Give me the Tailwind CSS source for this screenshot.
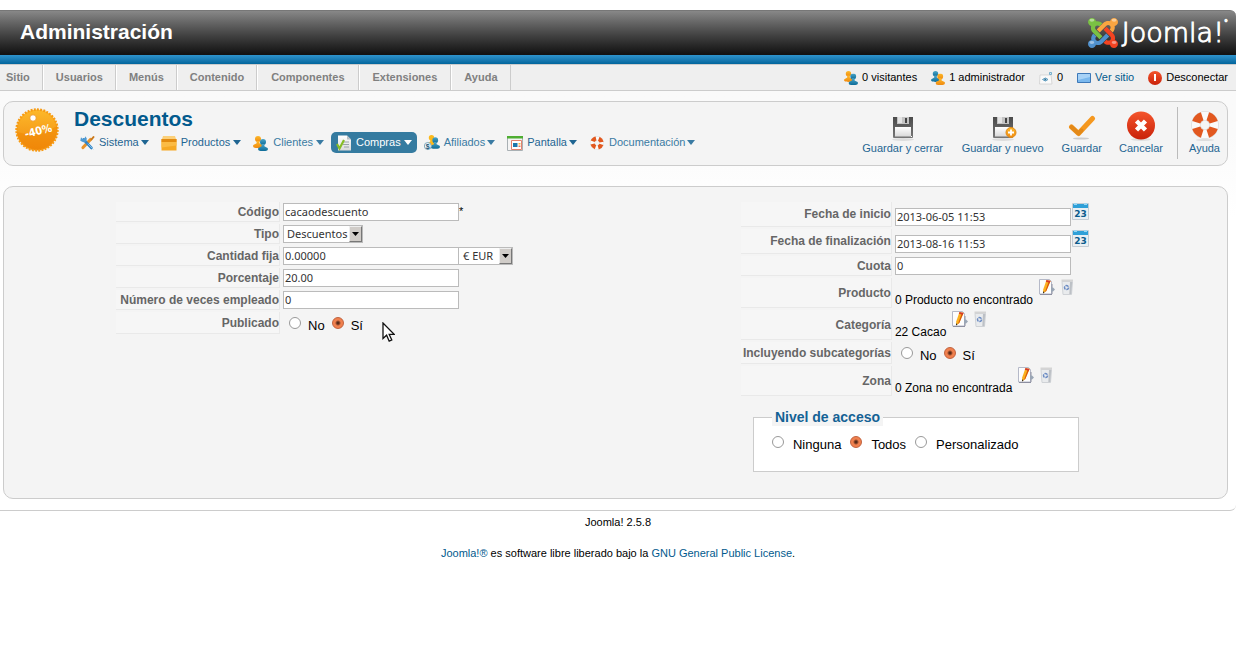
<!DOCTYPE html>
<html lang="es">

<head>
    <meta charset="UTF-8">
    <meta name="viewport" content="width=device-width, initial-scale=1">
    <title>Descuentos - Administración</title>
    <script src="https://cdn.jsdelivr.net/npm/@tailwindcss/browser@4"></script>
</head>

<body class="bg-white pt-2.5 font-['Liberation_Sans',Arial,sans-serif] text-[11px] text-black">

    <!-- shared icons -->
    <svg class="absolute size-0">
        <defs>
            <linearGradient id="gGold" x1="0" y1="0" x2="0" y2="1">
                <stop offset="0" stop-color="#fdb92a" />
                <stop offset="1" stop-color="#f08a10" />
            </linearGradient>
            <linearGradient id="gTeal" x1="0" y1="0" x2="0" y2="1">
                <stop offset="0" stop-color="#4aa5c8" />
                <stop offset="1" stop-color="#0d6c98" />
            </linearGradient>
            <linearGradient id="gSteel" x1="0" y1="0" x2="0" y2="1">
                <stop offset="0" stop-color="#4a4a4a" />
                <stop offset="1" stop-color="#777" />
            </linearGradient>
            <linearGradient id="gPaper" x1="0" y1="0" x2="0" y2="1">
                <stop offset="0" stop-color="#fff" />
                <stop offset="1" stop-color="#d9d9d9" />
            </linearGradient>
            <linearGradient id="gRed" x1="0" y1="0" x2="0" y2="1">
                <stop offset="0" stop-color="#f4552c" />
                <stop offset="1" stop-color="#c9210a" />
            </linearGradient>
        </defs>
        <symbol id="person" viewBox="0 0 10 12">
            <circle cx="5" cy="3" r="3" />
            <path d="M3.6 5h2.8v2.200L9.600 9c.6.6.4 2-.4 2.400-2 .8-6.400.8-8.400 0C0 11-.2 9.600.4 9l3.200-1.800z" />
        </symbol>
        <symbol id="caret" viewBox="0 0 8 5">
            <path d="M0 0h8L4 5z" fill="currentColor" />
        </symbol>
        <symbol id="floppy" viewBox="0 0 28 28">
            <ellipse cx="14" cy="25.500" rx="11" ry="1.500" fill="#ddd" />
            <path d="M4 3h20v20q0 1-1 1H5q-1 0-1-1z" fill="url(#gSteel)" />
            <path d="M8 3h12v7H8z" fill="#c4c4c4" />
            <path d="M9 3h4v6H9z" fill="#e4e4e4" />
            <path d="M16 4h2v5h-2z" fill="#444" />
            <path d="M6 13h16v9.500H6z" fill="url(#gPaper)" />
            <path d="M22 22h1v1h-1z" fill="#fff" />
        </symbol>
        <symbol id="buoy" viewBox="0 0 28 28">
            <circle cx="14" cy="14" r="9" fill="none" stroke="#d4d4d4" stroke-width="9.400" />
            <circle cx="14" cy="14" r="9" fill="none" stroke="#fafafa" stroke-width="8.400" />
            <circle cx="14" cy="14" r="9.200" fill="none" stroke="#e2581f" stroke-width="8.400" pathLength="80"
                stroke-dasharray="12 8" stroke-dashoffset="-4" />
        </symbol>
        <symbol id="calendar" viewBox="0 0 17 17">
            <path d="M.5.5h16v16H.5z" fill="#e9eff3" stroke="#c3ccd3" />
            <path d="M1 1h15v4H1z" fill="#2fa0d8" />
            <path d="M2 0h3v2H2zM12 0h3v2h-3z" fill="#9ad6f2" />
        </symbol>
        <symbol id="edit" viewBox="0 0 16 16">
            <path d="M.5.5h10l2 2v12.500H.5z" fill="#fdfdfd" stroke="#b5b9c8" />
            <path d="M1 15.500h12M13 5v10" stroke="#8d8fa0" fill="none" />
            <path d="M7.500 1l4 1-4.200 10-3.300 2.500.2-4z" fill="#fbb01f" />
            <path d="M10 1.500l1.500.5-4.200 10-1.300 1z" fill="#d8560c" />
            <path d="M7.500 1l4 1-.7 1.800-4-1z" fill="#d33a2c" />
            <path d="M4.100 12.500l1.600.6-1.700 1.400z" fill="#222" />
            <path d="M12 8.500h2l2 2-2 2h-2z" fill="#9aa6b5" />
        </symbol>
        <symbol id="trash" viewBox="0 0 16 16">
            <path d="M3 2.500h10.500l-1 13H4z" fill="#e9ebed" stroke="#cfd2d6" />
            <path d="M2.500 .5h11.500v2H2.500z" fill="#d4d4d4" />
            <path d="M11 3l-.7 12h1.900l1-12z" fill="#bcc0c5" />
            <circle cx="7.500" cy="8.500" r="2" fill="none" stroke="#6c8cc4" stroke-width="1.500" pathLength="9"
                stroke-dasharray="2.400 .6" />
        </symbol>
    </svg>

    <header>
        <div
            class="flex h-[45px] items-center justify-between rounded-tr-md border-t border-[#777] bg-linear-to-b from-[#888] to-[#111] pr-2 pl-5">
            <h1 class="pb-0.5 text-[21px] leading-7 font-bold text-white">Administración</h1>
            <a href="#" class="flex items-center gap-1 text-white">
                <svg class="size-[30px]" viewBox="0 32 448 448">
                    <defs>
                        <path id="arm"
                            d="M.6 92.100C.6 58.800 27.400 32 60.400 32c30 0 54.500 21.900 59.200 50.200 32.600-7.600 67.100.6 96.500 30l-44.300 44.300c-20.500-20.500-42.600-16.300-55.400-3.500-14.300 14.300-14.300 37.900 0 52.200l99.500 99.500-44 44.300c-87.700-87.200-49.700-49.700-99.800-99.700-26.800-26.500-35-64.800-24.800-98.900C20.400 144.600.6 120.700.6 92.100z" />
                    </defs>
                    <use href="#arm" fill="#7ac143" />
                    <use href="#arm" fill="#f9a541" transform="rotate(90 224 256)" />
                    <use href="#arm" fill="#f44321" transform="rotate(180 224 256)" />
                    <use href="#arm" fill="#5091cd" transform="rotate(270 224 256)" />
                    <g fill="#fff" opacity=".45">
                        <ellipse cx="58" cy="66" rx="36" ry="22" />
                        <ellipse cx="390" cy="66" rx="36" ry="22" />
                        <ellipse cx="58" cy="398" rx="36" ry="22" />
                        <ellipse cx="390" cy="398" rx="36" ry="22" />
                    </g>
                </svg>
                <span class="flex font-['DejaVu_Sans',sans-serif] text-[27px] leading-[30px] font-extralight [-webkit-text-stroke:1px_white]">Joomla!<sup
                        class="top-0 text-[8px] leading-3">°</sup></span>
            </a>
        </div>
        <div class="h-[9px] bg-linear-to-b from-[#2e94cd] to-[#00659c]"></div>
        <div class="flex h-[27px] items-center justify-between border-y border-[#ccc] bg-[#efefef] pr-2">
            <nav class="flex h-full font-bold text-[#808080]">
                <a href="#" class="flex items-center border-r border-[#ccc] pr-3 pl-1.5">Sitio</a>
                <a href="#" class="flex items-center border-r border-l border-r-[#ccc] border-l-white px-3">Usuarios</a>
                <a href="#" class="flex items-center border-r border-l border-r-[#ccc] border-l-white px-3">Menús</a>
                <a href="#" class="flex items-center border-r border-l border-r-[#ccc] border-l-white px-3">Contenido</a>
                <a href="#" class="flex items-center border-r border-l border-r-[#ccc] border-l-white px-[13px]">Componentes</a>
                <a href="#" class="flex items-center border-r border-l border-r-[#ccc] border-l-white px-[13px]">Extensiones</a>
                <a href="#" class="flex items-center border-r border-l border-r-[#ccc] border-l-white px-3">Ayuda</a>
            </nav>
            <div class="flex items-center gap-3.5">
                <span class="flex items-center gap-1">
                    <svg class="size-3.5" viewBox="0 0 14 14">
                        <use href="#person" x="0" y="0" width="9" height="11" fill="url(#gGold)" />
                        <use href="#person" x="4.500" y="2.500" width="9.500" height="11.500" fill="url(#gTeal)" />
                    </svg>
                    0 visitantes
                </span>
                <span class="flex items-center gap-1">
                    <svg class="size-3.5" viewBox="0 0 14 14">
                        <use href="#person" x="0" y="0" width="9" height="11" fill="url(#gTeal)" />
                        <use href="#person" x="4.500" y="2.500" width="9.500" height="11.500" fill="url(#gGold)" />
                    </svg>
                    1 administrador
                </span>
                <span class="flex items-center gap-1">
                    <svg class="size-3.5" viewBox="0 0 14 14">
                        <path d="M1 4h11l1 9H.5z" fill="#fafafa" stroke="#ccc" stroke-width=".7" />
                        <path d="M3.500 8.500q3-3 5.500 0-2.500 3-5.500 0z" fill="none" stroke="#5b9cc0" />
                        <circle cx="6.300" cy="8.500" r="1" fill="#2b7096" />
                        <path d="M10.500 1.500h2v2h-2z" fill="#d8ecf5" stroke="#5aa0c4" stroke-width=".8" />
                    </svg>
                    0
                </span>
                <a href="#" class="flex items-center gap-1 text-[#025a8d]">
                    <svg class="size-3.5" viewBox="0 0 14 14">
                        <path d="M.5 2.500h13v9H.5z" fill="#7ab8ee" stroke="#3d78b8" />
                        <path d="M1 3h12v3L1 9z" fill="#a7d2f7" />
                    </svg>
                    Ver sitio
                </a>
                <a href="#" class="flex items-center gap-1">
                    <svg class="size-3.5" viewBox="0 0 14 14">
                        <circle cx="7" cy="7" r="7" fill="url(#gRed)" />
                        <path d="M6 3h2v7H6z" fill="#fff" />
                    </svg>
                    Desconectar
                </a>
            </div>
        </div>
    </header>

    <div class="rounded-br-md border-b border-[#ccc] bg-linear-to-b from-[#fafafa] from-10% to-white to-30% pt-2.5 pr-2 pb-[11px] pl-[3px]">

        <!-- toolbar -->
        <div class="flex items-start justify-between rounded-[10px] border border-[#ccc] bg-[#f4f4f4] pt-[5px] pr-[7px] pb-1.5 pl-2.5">
            <div class="flex gap-3.5">
                <svg class="size-[46px]" viewBox="0 0 46 46">
                    <circle cx="23" cy="23" r="20.500" fill="url(#gGold)" />
                    <circle cx="23" cy="23" r="20.500" fill="none" stroke="#f79a12" stroke-width="2.400" pathLength="120"
                        stroke-dasharray="1.800 1.200" />
                    <path d="M3 25q20 6 40-6a20 20 0 0 1-40 6z" fill="#f08200" opacity=".45" />
                    <circle cx="19" cy="11" r="3.200" fill="#fff" stroke="#e98a10" stroke-width=".7" />
                    <text x="24" y="28" text-anchor="middle" transform="rotate(-14 23 23)"
                        font-family="DejaVu Sans Condensed, DejaVu Sans" font-weight="bold" font-size="11"
                        fill="#fff">-40%</text>
                </svg>
                <div>
                    <h2 class="mb-px text-[21px] leading-6 font-bold text-[#025a8d]">Descuentos</h2>
                    <nav class="flex gap-0.5 text-[#1f6592]">
                        <a href="#" class="flex h-[21px] items-center gap-1 px-[5px]">
                            <svg class="size-4" viewBox="0 0 16 16">
                                <path d="M11.500 4.500L4 12.500" stroke="#e8932a" stroke-width="3.200" stroke-linecap="round" />
                                <path d="M14.500 2l-2 2.500" stroke="#c9781c" stroke-width="2" stroke-linecap="round" />
                                <path d="M4.500 4.500l8 8.500" stroke="#2f83c5" stroke-width="2.600" stroke-linecap="round" />
                                <path d="M2 2.200l2 2.300 2-2 .3-1.300 1.500 2.300-.5 3-3 .8-3-1.500z" fill="#4f9ad2" />
                                <path d="M9 9l5 5" stroke="#86bfe6" stroke-linecap="round" />
                            </svg>
                            <span class="flex items-center gap-0.5">Sistema
                                <svg class="h-[5px] w-2">
                                    <use href="#caret" />
                                </svg></span>
                        </a>
                        <a href="#" class="flex h-[21px] items-center gap-1 px-[5px]">
                            <svg class="size-4" viewBox="0 0 16 16">
                                <path d="M2 1h12l1 3H1z" fill="#fbd07a" />
                                <path d="M.5 4h15v11.500H.5z" fill="#f6a925" />
                                <path d="M.5 4h15v3H.5z" fill="#e38b10" />
                                <path d="M.5 7h15v3.500l-15 2z" fill="#fbbb45" />
                            </svg>
                            <span class="flex items-center gap-[3px]">Productos
                                <svg class="h-[5px] w-2">
                                    <use href="#caret" />
                                </svg></span>
                        </a>
                        <a href="#" class="flex h-[21px] items-center gap-1 px-[5px] text-[#3a7ba3]">
                            <svg class="size-4" viewBox="0 0 16 16">
                                <use href="#person" x="0" y="1" width="10" height="12" fill="url(#gGold)" />
                                <use href="#person" x="5" y="4" width="10" height="12" fill="url(#gTeal)" />
                            </svg>
                            <span class="flex items-center gap-[3px]">Clientes
                                <svg class="h-[5px] w-2">
                                    <use href="#caret" />
                                </svg></span>
                        </a>
                        <a href="#" class="flex h-[21px] items-center gap-1 rounded-[5px] bg-[#357ba0] px-[5px] text-white">
                            <svg class="size-4" viewBox="0 0 16 16">
                                <path d="M2 .5h9l4 4v11H2z" fill="url(#gPaper)" />
                                <path d="M11 .5v4h4z" fill="#b9c0c4" />
                                <path d="M8 7h5M7 9.500h6M8 12h5" stroke="#9aa3a8" />
                                <path d="M1 9l2.500 4.500L8 5" fill="none" stroke="#86bc25" stroke-width="2.200" />
                            </svg>
                            <span class="flex items-center gap-[3px]">Compras
                                <svg class="h-[5px] w-2">
                                    <use href="#caret" />
                                </svg></span>
                        </a>
                        <a href="#" class="flex h-[21px] items-center gap-1 px-[5px] text-[#3a7ba3]">
                            <svg class="size-4" viewBox="0 0 16 16">
                                <use href="#person" x="3" y="0" width="9" height="11" fill="#fbb91c" />
                                <use href="#person" x="6.500" y="2" width="9.500" height="12" fill="url(#gTeal)" />
                                <circle cx="3.800" cy="11" r="3.500" fill="#eef5f9" stroke="#7fa9bf" />
                                <text x="3.800" y="13.500" text-anchor="middle" font-size="7" font-weight="bold"
                                    fill="#1d5878">$</text>
                            </svg>
                            <span class="flex items-center gap-0.5">Afiliados
                                <svg class="h-[5px] w-2">
                                    <use href="#caret" />
                                </svg></span>
                        </a>
                        <a href="#" class="flex h-[21px] items-center gap-1 px-[5px]">
                            <svg class="size-4" viewBox="0 0 16 16">
                                <path d="M.5 1.500h15v14H.5z" fill="#f4f4f4" stroke="#a9b0b4" />
                                <path d="M0 1h16v2.500H0z" fill="#4fae32" />
                                <path d="M4.500 5.500h10v9h-10z" fill="#fff" stroke="#e3836f" />
                                <path d="M6 8h4.500v4H6z" fill="#1c78ad" />
                                <path d="M11.500 8h2v1.500h-2z" fill="#f2b43a" />
                                <path d="M11.500 10.500h2V12h-2z" fill="#e4785f" />
                            </svg>
                            <span class="flex items-center gap-0.5">Pantalla
                                <svg class="h-[5px] w-2">
                                    <use href="#caret" />
                                </svg></span>
                        </a>
                        <a href="#" class="flex h-[21px] items-center gap-1 px-[5px] text-[#3a7ba3]">
                            <svg class="size-4 p-px">
                                <use href="#buoy" />
                            </svg>
                            <span class="flex items-center gap-0.5">Documentación
                                <svg class="h-[5px] w-2">
                                    <use href="#caret" />
                                </svg></span>
                        </a>
                    </nav>
                </div>
            </div>
            <div class="flex text-[#1f6592]">
                <button type="button" class="flex w-25 flex-col items-center pt-[3px] leading-[13px]">
                    <svg class="h-8 w-7 pt-1">
                        <use href="#floppy" width="28" height="28" />
                    </svg>
                    Guardar y cerrar
                </button>
                <button type="button" class="flex w-25 flex-col items-center pt-[3px] leading-[13px]">
                    <svg class="h-8 w-7 pt-1" viewBox="0 0 28 28">
                        <use href="#floppy" width="28" height="28" />
                        <circle cx="22" cy="18.500" r="5" fill="url(#gGold)" stroke="#e08a17" />
                        <path d="M22 15.500v6M19 18.500h6" stroke="#fff" stroke-width="1.800" />
                    </svg>
                    Guardar y nuevo
                </button>
                <button type="button" class="flex flex-col items-center px-[9px] pt-[3px] leading-[13px]">
                    <svg class="h-8 w-7" viewBox="0 0 28 32">
                        <ellipse cx="13" cy="28.500" rx="8" ry="1" fill="#ccc" />
                        <path d="M3.500 17l7 6.500L24.500 8.500" fill="none" stroke="#f5981f" stroke-width="5"
                            stroke-linejoin="round" stroke-linecap="round" />
                        <path d="M3.500 17l7 6.500 3-3" fill="none" stroke="#d27a12" stroke-width="4" opacity=".5"
                            stroke-linejoin="round" stroke-linecap="round" />
                    </svg>
                    Guardar
                </button>
                <button type="button" class="flex flex-col items-center px-2 pt-[3px] leading-[13px]">
                    <svg class="h-8 w-7" viewBox="0 0 28 32">
                        <ellipse cx="14" cy="29.500" rx="10" ry="1.500" fill="#ddd" />
                        <circle cx="14" cy="15.500" r="14" fill="url(#gRed)" />
                        <path d="M9.500 11l9 9M18.500 11l-9 9" stroke="#fff" stroke-width="4.500" />
                    </svg>
                    Cancelar
                </button>
                <button type="button" class="ml-1.5 flex flex-col items-center border-l border-[#bbb] pt-[3px] pb-1 pl-[11px] leading-[13px]">
                    <svg class="h-8 w-7" viewBox="0 0 28 32">
                        <ellipse cx="14" cy="30" rx="9" ry="1" fill="#ddd" />
                        <use href="#buoy" y="1" width="28" height="28" />
                    </svg>
                    Ayuda
                </button>
            </div>
        </div>

        <!-- form -->
        <form class="mt-5 grid grid-cols-[9fr_7fr] rounded-[10px] border border-[#ccc] bg-[#f4f4f4] pt-[13px] pb-[26px] pl-28">
            <div class="relative">
                <table class="-ml-0.5 border-separate border-spacing-0.5">
                    <tbody>
                        <tr>
                            <th class="h-5 w-[164px] border-r border-b border-[#e9e9e9] bg-[#f6f6f6] p-0 text-right text-xs font-bold text-[#666]">
                                <label for="code">Código</label></th>
                            <td class="p-0 pl-px">
                                <div class="flex">
                                    <input id="code" type="text" value="cacaodescuento"
                                        class="h-[18px] w-[176px] border border-[#bbb] bg-white px-px pb-0.5 font-['Noto_Sans',sans-serif] text-[11px] text-[#333]">
                                    <span>*</span>
                                </div>
                            </td>
                        </tr>
                        <tr>
                            <th class="h-5 w-[164px] border-r border-b border-[#e9e9e9] bg-[#f6f6f6] p-0 text-right text-xs font-bold text-[#666]">
                                <label for="type">Tipo</label></th>
                            <td class="p-0 pl-px">
                                <div class="relative w-20">
                                    <select id="type"
                                        class="block h-[18px] w-full appearance-none border border-[#bbb] bg-white pl-[3px] font-['Noto_Sans',sans-serif] text-[11px] leading-4 text-[#333]">
                                        <option>Descuentos</option>
                                        <option>Cupón</option>
                                    </select>
                                    <span
                                        class="pointer-events-none absolute top-px right-px flex h-4 w-[13px] items-center justify-center border border-t-[#eee] border-r-[#777] border-b-[#777] border-l-[#eee] bg-[#d0ccc8]">
                                        <svg class="h-1 w-[7px]" viewBox="0 0 7 4">
                                            <path d="M0 0h7L3.500 4z" />
                                        </svg>
                                    </span>
                                </div>
                            </td>
                        </tr>
                        <tr>
                            <th class="h-5 w-[164px] border-r border-b border-[#e9e9e9] bg-[#f6f6f6] p-0 text-right text-xs font-bold text-[#666]">
                                <label for="flat">Cantidad fija</label></th>
                            <td class="p-0 pl-px">
                                <div class="flex">
                                    <input id="flat" type="text" value="0.00000"
                                        class="h-[18px] w-[176px] border border-[#bbb] bg-white px-px pb-0.5 font-['Noto_Sans',sans-serif] text-[11px] text-[#333]">
                                    <div class="relative w-[54px]">
                                        <select aria-label="Moneda"
                                            class="block h-[18px] w-full appearance-none border border-l-0 border-[#bbb] bg-white pl-1 font-['Noto_Sans',sans-serif] text-[11px] leading-4 text-[#333]">
                                            <option>€ EUR</option>
                                            <option>$ USD</option>
                                        </select>
                                        <span
                                            class="pointer-events-none absolute top-px right-px flex h-4 w-[13px] items-center justify-center border border-t-[#eee] border-r-[#777] border-b-[#777] border-l-[#eee] bg-[#d0ccc8]">
                                            <svg class="h-1 w-[7px]" viewBox="0 0 7 4">
                                                <path d="M0 0h7L3.500 4z" />
                                            </svg>
                                        </span>
                                    </div>
                                </div>
                            </td>
                        </tr>
                        <tr>
                            <th class="h-5 w-[164px] border-r border-b border-[#e9e9e9] bg-[#f6f6f6] p-0 text-right text-xs font-bold text-[#666]">
                                <label for="percent">Porcentaje</label></th>
                            <td class="p-0 pl-px">
                                <input id="percent" type="text" value="20.00"
                                    class="block h-[18px] w-[176px] border border-[#bbb] bg-white px-px pb-0.5 font-['Noto_Sans',sans-serif] text-[11px] text-[#333]">
                            </td>
                        </tr>
                        <tr>
                            <th class="h-5 w-[164px] border-r border-b border-[#e9e9e9] bg-[#f6f6f6] p-0 text-right text-xs font-bold text-[#666]">
                                <label for="used">Número de veces empleado</label></th>
                            <td class="p-0 pl-px">
                                <input id="used" type="text" value="0"
                                    class="block h-[18px] w-[176px] border border-[#bbb] bg-white px-px pb-0.5 font-['Noto_Sans',sans-serif] text-[11px] text-[#333]">
                            </td>
                        </tr>
                        <tr>
                            <th class="h-[22px] w-[164px] border-r border-b border-[#e9e9e9] bg-[#f6f6f6] p-0 text-right text-xs font-bold text-[#666]">
                                Publicado</th>
                            <td class="p-0 pl-px">
                                <div class="flex h-4 gap-[7px] pt-0.5 pl-1.5 text-[13px] leading-[18px]">
                                    <input id="pub0" type="radio" name="published"
                                        class="size-3 appearance-none rounded-full border border-[#999] bg-white checked:border-[#c0603c] checked:bg-[radial-gradient(circle,#5a2a18_0_1px,#f0804e_3px)]">
                                    <label for="pub0">No</label>
                                    <input id="pub1" type="radio" name="published" checked
                                        class="size-3 appearance-none rounded-full border border-[#999] bg-white checked:border-[#c0603c] checked:bg-[radial-gradient(circle,#5a2a18_0_1px,#f0804e_3px)]">
                                    <label for="pub1">Sí</label>
                                </div>
                            </td>
                        </tr>
                    </tbody>
                </table>
                <!-- pointer -->
                <svg class="absolute top-[122px] left-[266px] h-[21px] w-[13px]" viewBox="0 0 13 21">
                    <path d="M1 1v15.500l3.600-3.300 2.600 6 2.600-1.200-2.600-5.600h5z" fill="#fff" stroke="#111"
                        stroke-width="1.300" />
                </svg>
            </div>

            <div>
                <table class="-ml-0.5 border-separate border-spacing-0.5">
                    <tbody>
                        <tr>
                            <th class="h-[25px] w-[151px] border-r border-b border-[#e9e9e9] bg-[#f6f6f6] p-0 text-right text-xs font-bold text-[#666]">
                                <label for="start">Fecha de inicio</label></th>
                            <td class="p-0 pl-px">
                                <div class="flex h-[23px] gap-px">
                                    <input id="start" type="text" value="2013-06-05 11:53"
                                        class="h-[18px] w-[176px] self-end border border-[#bbb] bg-white px-px pb-0.5 font-['Noto_Sans',sans-serif] text-[11px] text-[#333]">
                                    <button type="button" class="size-[17px]" aria-label="Calendario">
                                        <svg class="size-[17px]" viewBox="0 0 17 17">
                                            <use href="#calendar" />
                                            <text x="8.500" y="14" text-anchor="middle" font-family="DejaVu Sans"
                                                font-weight="bold" font-size="9" fill="#0b5c8c">23</text>
                                        </svg></button>
                                </div>
                            </td>
                        </tr>
                        <tr>
                            <th class="h-[25px] w-[151px] border-r border-b border-[#e9e9e9] bg-[#f6f6f6] p-0 text-right text-xs font-bold text-[#666]">
                                <label for="end">Fecha de finalización</label></th>
                            <td class="p-0 pl-px">
                                <div class="flex h-[23px] gap-px">
                                    <input id="end" type="text" value="2013-08-16 11:53"
                                        class="h-[18px] w-[176px] self-end border border-[#bbb] bg-white px-px pb-0.5 font-['Noto_Sans',sans-serif] text-[11px] text-[#333]">
                                    <button type="button" class="size-[17px]" aria-label="Calendario">
                                        <svg class="size-[17px]" viewBox="0 0 17 17">
                                            <use href="#calendar" />
                                            <text x="8.500" y="14" text-anchor="middle" font-family="DejaVu Sans"
                                                font-weight="bold" font-size="9" fill="#0b5c8c">23</text>
                                        </svg></button>
                                </div>
                            </td>
                        </tr>
                        <tr>
                            <th class="h-5 w-[151px] border-r border-b border-[#e9e9e9] bg-[#f6f6f6] p-0 text-right text-xs font-bold text-[#666]">
                                <label for="quota">Cuota</label></th>
                            <td class="p-0 pl-px">
                                <input id="quota" type="text" value="0"
                                    class="block h-[18px] w-[176px] border border-[#bbb] bg-white px-px pb-0.5 font-['Noto_Sans',sans-serif] text-[11px] text-[#333]">
                            </td>
                        </tr>
                        <tr>
                            <th class="h-[30px] w-[151px] border-r border-b border-[#e9e9e9] bg-[#f6f6f6] p-0 text-right text-xs font-bold text-[#666]">
                                Producto</th>
                            <td class="p-0 pl-px">
                                <div class="flex h-7 items-start gap-1 text-xs">
                                    <span class="self-end pr-0.5 leading-[14px]">0 Producto no encontrado</span>
                                    <button type="button" aria-label="Editar"><svg class="size-4">
                                            <use href="#edit" />
                                        </svg></button>
                                    <button type="button" aria-label="Borrar"><svg class="size-4">
                                            <use href="#trash" />
                                        </svg></button>
                                </div>
                            </td>
                        </tr>
                        <tr>
                            <th class="h-[30px] w-[151px] border-r border-b border-[#e9e9e9] bg-[#f6f6f6] p-0 text-right text-xs font-bold text-[#666]">
                                Categoría</th>
                            <td class="p-0 pl-px">
                                <div class="flex h-7 items-start gap-1 text-xs">
                                    <span class="self-end pr-0.5 leading-[14px]">22 Cacao</span>
                                    <button type="button" aria-label="Editar"><svg class="size-4">
                                            <use href="#edit" />
                                        </svg></button>
                                    <button type="button" aria-label="Borrar"><svg class="size-4">
                                            <use href="#trash" />
                                        </svg></button>
                                </div>
                            </td>
                        </tr>
                        <tr>
                            <th class="h-[22px] w-[151px] border-r border-b border-[#e9e9e9] bg-[#f6f6f6] p-0 text-right text-xs font-bold text-[#666]">
                                Incluyendo subcategorías</th>
                            <td class="p-0 pl-px">
                                <div class="flex h-4 gap-[7px] pt-0.5 pl-1.5 text-[13px] leading-[18px]">
                                    <input id="sub0" type="radio" name="subcats"
                                        class="size-3 appearance-none rounded-full border border-[#999] bg-white checked:border-[#c0603c] checked:bg-[radial-gradient(circle,#5a2a18_0_1px,#f0804e_3px)]">
                                    <label for="sub0">No</label>
                                    <input id="sub1" type="radio" name="subcats" checked
                                        class="size-3 appearance-none rounded-full border border-[#999] bg-white checked:border-[#c0603c] checked:bg-[radial-gradient(circle,#5a2a18_0_1px,#f0804e_3px)]">
                                    <label for="sub1">Sí</label>
                                </div>
                            </td>
                        </tr>
                        <tr>
                            <th class="h-[30px] w-[151px] border-r border-b border-[#e9e9e9] bg-[#f6f6f6] p-0 text-right text-xs font-bold text-[#666]">
                                Zona</th>
                            <td class="p-0 pl-px">
                                <div class="flex h-7 items-start gap-1 text-xs">
                                    <span class="self-end pr-0.5 leading-[14px]">0 Zona no encontrada</span>
                                    <button type="button" aria-label="Editar"><svg class="size-4">
                                            <use href="#edit" />
                                        </svg></button>
                                    <button type="button" aria-label="Borrar"><svg class="size-4">
                                            <use href="#trash" />
                                        </svg></button>
                                </div>
                            </td>
                        </tr>
                    </tbody>
                </table>
                <fieldset class="mt-2.5 ml-3 w-[326px] border border-[#ccc] bg-white px-[18px] pt-2.5 pb-[19px]">
                    <legend class="bg-[#f4f4f4] px-[3px] text-sm leading-[18px] font-bold text-[#146295]">Nivel de acceso</legend>
                    <div class="flex h-4 gap-[9px] text-[13px] leading-[18px]">
                        <input id="acl0" type="radio" name="access"
                            class="size-3 appearance-none rounded-full border border-[#999] bg-white checked:border-[#c0603c] checked:bg-[radial-gradient(circle,#5a2a18_0_1px,#f0804e_3px)]">
                        <label for="acl0">Ninguna</label>
                        <input id="acl1" type="radio" name="access" checked
                            class="size-3 appearance-none rounded-full border border-[#999] bg-white checked:border-[#c0603c] checked:bg-[radial-gradient(circle,#5a2a18_0_1px,#f0804e_3px)]">
                        <label for="acl1">Todos</label>
                        <input id="acl2" type="radio" name="access"
                            class="size-3 appearance-none rounded-full border border-[#999] bg-white checked:border-[#c0603c] checked:bg-[radial-gradient(circle,#5a2a18_0_1px,#f0804e_3px)]">
                        <label for="acl2">Personalizado</label>
                    </div>
                </fieldset>
            </div>
        </form>
    </div>

    <footer class="pt-1 text-center leading-[15px]">
        <p>Joomla! 2.5.8</p>
        <p class="mt-4"><a href="#" class="text-[#025a8d]">Joomla!®</a> es software libre liberado bajo la <a href="#"
                class="text-[#025a8d]">GNU General Public License</a>.</p>
    </footer>

</body>

</html>
